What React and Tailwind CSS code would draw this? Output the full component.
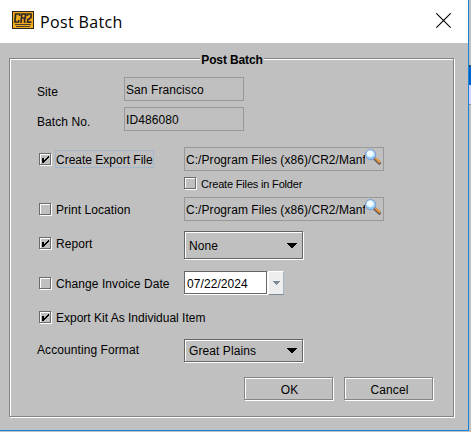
const ETCHED = 'border shadow-[inset_1px_1px_0_#fff,1px_1px_0_#fff]';

function Check({ on }) {
  return (
    <span className={`${ETCHED} block h-3 w-3 shrink-0 border-[#6b6b6b]`}>
      {on && (
        <svg width="10" height="10" viewBox="0 0 10 10" className="block" shapeRendering="crispEdges">
          <path d="M2 4h2v2h1v-1h1v-1h1v-1h1v-1h1v2h-1v1h-1v1h-1v1h-1v1h-1v1h-2z" fill="#000" />
        </svg>
      )}
    </span>
  );
}

function CheckLabel({ on, focus, tight, children }) {
  return (
    <div className={`flex h-6 w-[145px] shrink-0 items-center ${tight ? 'tracking-normal' : ''}`}>
      <Check on={on} />
      <span className={`ml-1 h-[18px] border leading-[18px] whitespace-nowrap ${focus ? 'border-[#a3b8cc]' : 'border-transparent'}`}>
        {children}
      </span>
    </div>
  );
}

function Field({ label, value }) {
  return (
    <div className="flex h-6">
      <span className="w-[87px] pt-[7px] leading-[16px]">{label}</span>
      <div className="h-6 w-[120px] border border-[#999] pl-px leading-[24px]">{value}</div>
    </div>
  );
}

function Magnifier() {
  return (
    <svg width="18" height="18" viewBox="0 0 18 18" className="absolute top-0 right-px">
      <path d="M10.8 10.8l4.6 4.3" stroke="#6f6259" strokeWidth="3.4" strokeLinecap="round" />
      <path d="M11.8 10.6l3.8 3.6" stroke="#f39a3c" strokeWidth="1.8" strokeLinecap="round" />
      <circle cx="6.6" cy="6.6" r="5" fill="#bfe6fa" stroke="#7f9fd6" strokeWidth="1.2" />
      <circle cx="6" cy="5.8" r="3.2" fill="#effbff" />
      <path d="M3.2 8.5c2 2.6 5.5 2 7-.7" stroke="#8ccaf2" strokeWidth="1.5" fill="none" />
    </svg>
  );
}

function PathField() {
  return (
    <div className="relative h-6 w-[200px] overflow-hidden border border-[#999] pl-px leading-[24px] tracking-[0.06px] whitespace-nowrap">
      <div className="w-[179px] overflow-hidden">C:/Program Files (x86)/CR2/Manf</div>
      <Magnifier />
    </div>
  );
}

function Combo({ value, tall }) {
  return (
    <div className={`${ETCHED} flex w-[119px] items-center justify-between border-[#666] pr-[5px] pl-1 ${tall ? 'h-7 pt-px' : 'h-[23px]'}`}>
      <span>{value}</span>
      <svg width="10" height="5" viewBox="0 0 10 5" shapeRendering="crispEdges">
        <path d="M0 0h10v1h-1v1h-1v1h-1v1h-1v1h-2v-1h-1v-1h-1v-1h-1v-1h-1z" fill="#000" />
      </svg>
    </div>
  );
}

function Button({ children }) {
  return (
    <button className={`${ETCHED} h-[23px] w-[89px] border-[#848484] pt-[2px] pl-[2px] leading-[20px] tracking-[0.1px]`}>{children}</button>
  );
}

function Logo() {
  return (
    <svg width="22" height="18" viewBox="0 0 22 18">
      <rect x=".5" y=".5" width="21" height="17" fill="#f2aa1e" stroke="#2b2620" />
      <g fill="none" stroke="#302a25" strokeWidth="1.7">
        <path d="M7.7 5V3H3.6L2.9 11h3.6l.5-2" />
        <path d="M9 12L9.8 3h3.8l-.3 4H9.6M12.6 7v5" />
        <path d="M15.4 5V3h3.6v3.5L15.6 9v2.2H19.4" />
      </g>
      <path d="M3 13.5h16M4 15.5h14" stroke="#4b4030" />
    </svg>
  );
}

export default function App() {
  return (
    <div className="flex h-[432px] w-[471px] overflow-hidden bg-[#c0c0c0] font-['Liberation_Sans',Arial,sans-serif] text-[12px] tracking-[0.08px] text-black">
      <div className="flex h-[431px] w-[469px] flex-col border-r border-b border-[#1683d8] bg-[#c0c0c0]">
        <header className="flex h-[43px] shrink-0 bg-white pt-[11px] pl-3">
          <Logo />
          <h1 className="-mt-[2px] ml-[6px] grow font-['Open_Sans','Noto_Sans',sans-serif] text-[16px] leading-[26px] tracking-[0.35px]">Post Batch</h1>
          <svg width="15" height="15" viewBox="0 0 15 15" className="mt-[2px] mr-[17px]">
            <path d="M.3.3l14.4 14.4M14.7.3L.3 14.7" stroke="#000" strokeWidth="1.1" />
          </svg>
        </header>

        <main className={`${ETCHED} mt-[15px] ml-[9px] h-[359px] w-[445px] border-[#848484]`}>
          <h2 className="mx-auto -mt-[7px] h-4 w-[64px] bg-[#c0c0c0] pl-px text-center leading-[16px] font-bold tracking-[-0.12px] whitespace-nowrap">Post Batch</h2>
          <div className="pt-[9px] pl-[27px]">
            <Field label="Site" value="San Francisco" />
            <div className="mt-[6px]">
              <Field label="Batch No." value="ID486080" />
            </div>

            <div className="mt-4 ml-[2px] flex h-6">
              <CheckLabel on focus tight>Create Export File</CheckLabel>
              <PathField />
            </div>
            <div className="mt-[6px] ml-[147px] flex h-[13px] items-start">
              <Check />
              <span className="ml-[5px] text-[11px] leading-[15px] tracking-[-0.18px]">Create Files in Folder</span>
            </div>
            <div className="mt-[7px] ml-[2px] flex h-6">
              <CheckLabel>Print Location</CheckLabel>
              <PathField />
            </div>
            <div className="mt-[10px] ml-[2px] flex h-[29px]">
              <CheckLabel on>Report</CheckLabel>
              <Combo value="None" tall />
            </div>
            <div className="mt-[11px] ml-[2px] flex h-6">
              <CheckLabel>Change Invoice Date</CheckLabel>
              <div className="h-[23px] w-[83px] border border-[#666] bg-white pl-[2px] leading-[24px] shadow-[0_1px_0_#fff,1px_1px_0_#fff]">07/22/2024</div>
              <div className="ml-px flex h-6 w-4 items-center justify-center border border-t-white border-r-[#a3b8cc] border-b-[#7a8a99] border-l-white bg-[#eee]">
                <svg width="7" height="4" viewBox="0 0 7 4" shapeRendering="crispEdges">
                  <path d="M0 0h7v1h-1v1h-1v1h-1v1h-1v-1h-1v-1h-1v-1h-1z" fill="#7a8a99" />
                </svg>
              </div>
            </div>
            <div className="mt-[10px] ml-[2px] flex h-6">
              <CheckLabel on tight>Export Kit As Individual Item</CheckLabel>
            </div>
            <div className="mt-[10px] flex h-6">
              <span className="w-[147px] pt-[3px] leading-[16px]">Accounting Format</span>
              <Combo value="Great Plains" />
            </div>
            <div className="mt-[14px] ml-[207px] flex gap-[11px]">
              <Button>OK</Button>
              <Button>Cancel</Button>
            </div>
          </div>
        </main>
      </div>
      <aside className="flex w-[2px] flex-col">
        <div className="h-[65px] bg-[#c0c0c0]" />
        <div className="h-[2px] bg-[#31516f]" />
        <div className="h-[18px] bg-[#0063cc]" />
        <div className="h-[19px] bg-[#d2d2fa]" />
        <div className="h-px bg-[#8b8b8b]" />
      </aside>
    </div>
  );
}
